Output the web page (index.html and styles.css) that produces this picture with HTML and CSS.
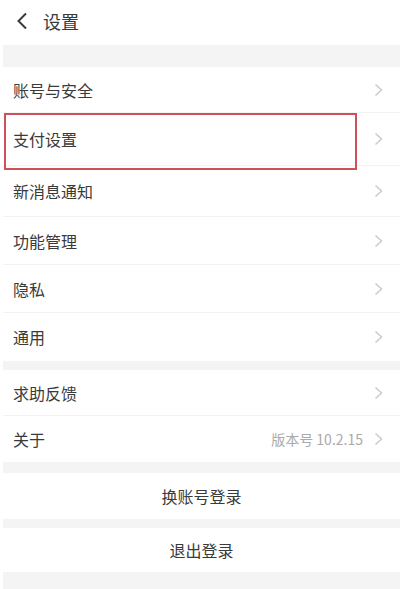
FILE: index.html
```html
<!DOCTYPE html>
<html lang="zh-CN">
<head>
  <meta charset="UTF-8">
  <meta name="viewport" content="width=device-width, initial-scale=1.0">
  <title>设置</title>
  <link rel="stylesheet" href="styles.css">
</head>
<body>
  <div class="page">
    <!--HEADER-->
    <div class="header">
      <svg class="back" width="12" height="18" viewBox="0 0 12 18">
        <polyline points="10,1.5 2.5,9 10,16.5" fill="none" stroke="#3a3a3a" stroke-width="2"/>
      </svg>
      <span class="title">设置</span>
    </div>

    <div class="gap gap-top"></div>

    <div class="row row-first">
      <span>账号与安全</span>
      <svg class="arrow" width="9" height="14" viewBox="0 0 9 14"><polyline points="1.5,1.5 7.5,7 1.5,12.5"/></svg>
    </div>
    <div class="row row-marked">
      <span>支付设置</span>
      <svg class="arrow" width="9" height="14" viewBox="0 0 9 14"><polyline points="1.5,1.5 7.5,7 1.5,12.5"/></svg>
      <div class="mark"></div>
    </div>
    <div class="row row-tall">
      <span>新消息通知</span>
      <svg class="arrow" width="9" height="14" viewBox="0 0 9 14"><polyline points="1.5,1.5 7.5,7 1.5,12.5"/></svg>
    </div>
    <div class="row">
      <span>功能管理</span>
      <svg class="arrow" width="9" height="14" viewBox="0 0 9 14"><polyline points="1.5,1.5 7.5,7 1.5,12.5"/></svg>
    </div>
    <div class="row">
      <span>隐私</span>
      <svg class="arrow" width="9" height="14" viewBox="0 0 9 14"><polyline points="1.5,1.5 7.5,7 1.5,12.5"/></svg>
    </div>
    <div class="row row-last">
      <span>通用</span>
      <svg class="arrow" width="9" height="14" viewBox="0 0 9 14"><polyline points="1.5,1.5 7.5,7 1.5,12.5"/></svg>
    </div>

    <div class="gap gap-small"></div>

    <div class="row row-first">
      <span>求助反馈</span>
      <svg class="arrow" width="9" height="14" viewBox="0 0 9 14"><polyline points="1.5,1.5 7.5,7 1.5,12.5"/></svg>
    </div>
    <div class="row row-first row-last">
      <span>关于</span>
      <span class="version">版本号 10.2.15</span>
      <svg class="arrow" width="9" height="14" viewBox="0 0 9 14"><polyline points="1.5,1.5 7.5,7 1.5,12.5"/></svg>
    </div>

    <div class="gap gap-mid"></div>

    <!--ACCOUNT BUTTONS-->
    <div class="button-row">换账号登录</div>
    <div class="gap gap-small"></div>
    <div class="button-row button-last">退出登录</div>

    <div class="gap gap-end"></div>
  </div>
</body>
</html>
```

FILE: styles.css
```css
body {
  background-color: white;
  margin: 0;
  font-family: "Noto Sans CJK SC", "Noto Sans", sans-serif;
  color: #3a3a3a;
}
.page {
  width: 397px;
  margin-left: 3px;
}
.header {
  height: 45px;
  display: flex;
  align-items: center;
  padding-left: 13px;
}
.back {
  margin-top: -4px;
}
.title {
  font-size: 18px;
  margin-left: 15px;
  margin-top: -4px;
  color: #3a3a3a;
}
.gap {
  background-color: #f4f4f4;
}
.gap-top {
  height: 22px;
}
.gap-small {
  height: 9px;
}
.gap-mid {
  height: 11px;
}
.gap-end {
  height: 18px;
}
.row {
  height: 48px;
  display: flex;
  align-items: center;
  padding-left: 10px;
  padding-right: 17px;
  font-size: 16px;
  border-bottom: 1px solid #f3f3f3;
  box-sizing: border-box;
}
.row span:first-child {
  flex: 1;
}
.row-first {
  height: 46px;
}
.row-marked {
  height: 53px;
  position: relative;
}
.row-tall {
  height: 51px;
}
.row-last {
  border-bottom: none;
}
.arrow polyline {
  fill: none;
  stroke: #c9c9c9;
  stroke-width: 1.4;
}
.version {
  font-size: 14px;
  color: #aaa;
  margin-right: 11px;
}
.mark {
  position: absolute;
  left: 1px;
  top: 0;
  width: 353px;
  height: 57px;
  border: 2px solid #d0505a;
  box-sizing: border-box;
}
.button-row {
  height: 46px;
  display: flex;
  justify-content: center;
  align-items: center;
  font-size: 16px;
}
.button-last {
  height: 44px;
}
```
